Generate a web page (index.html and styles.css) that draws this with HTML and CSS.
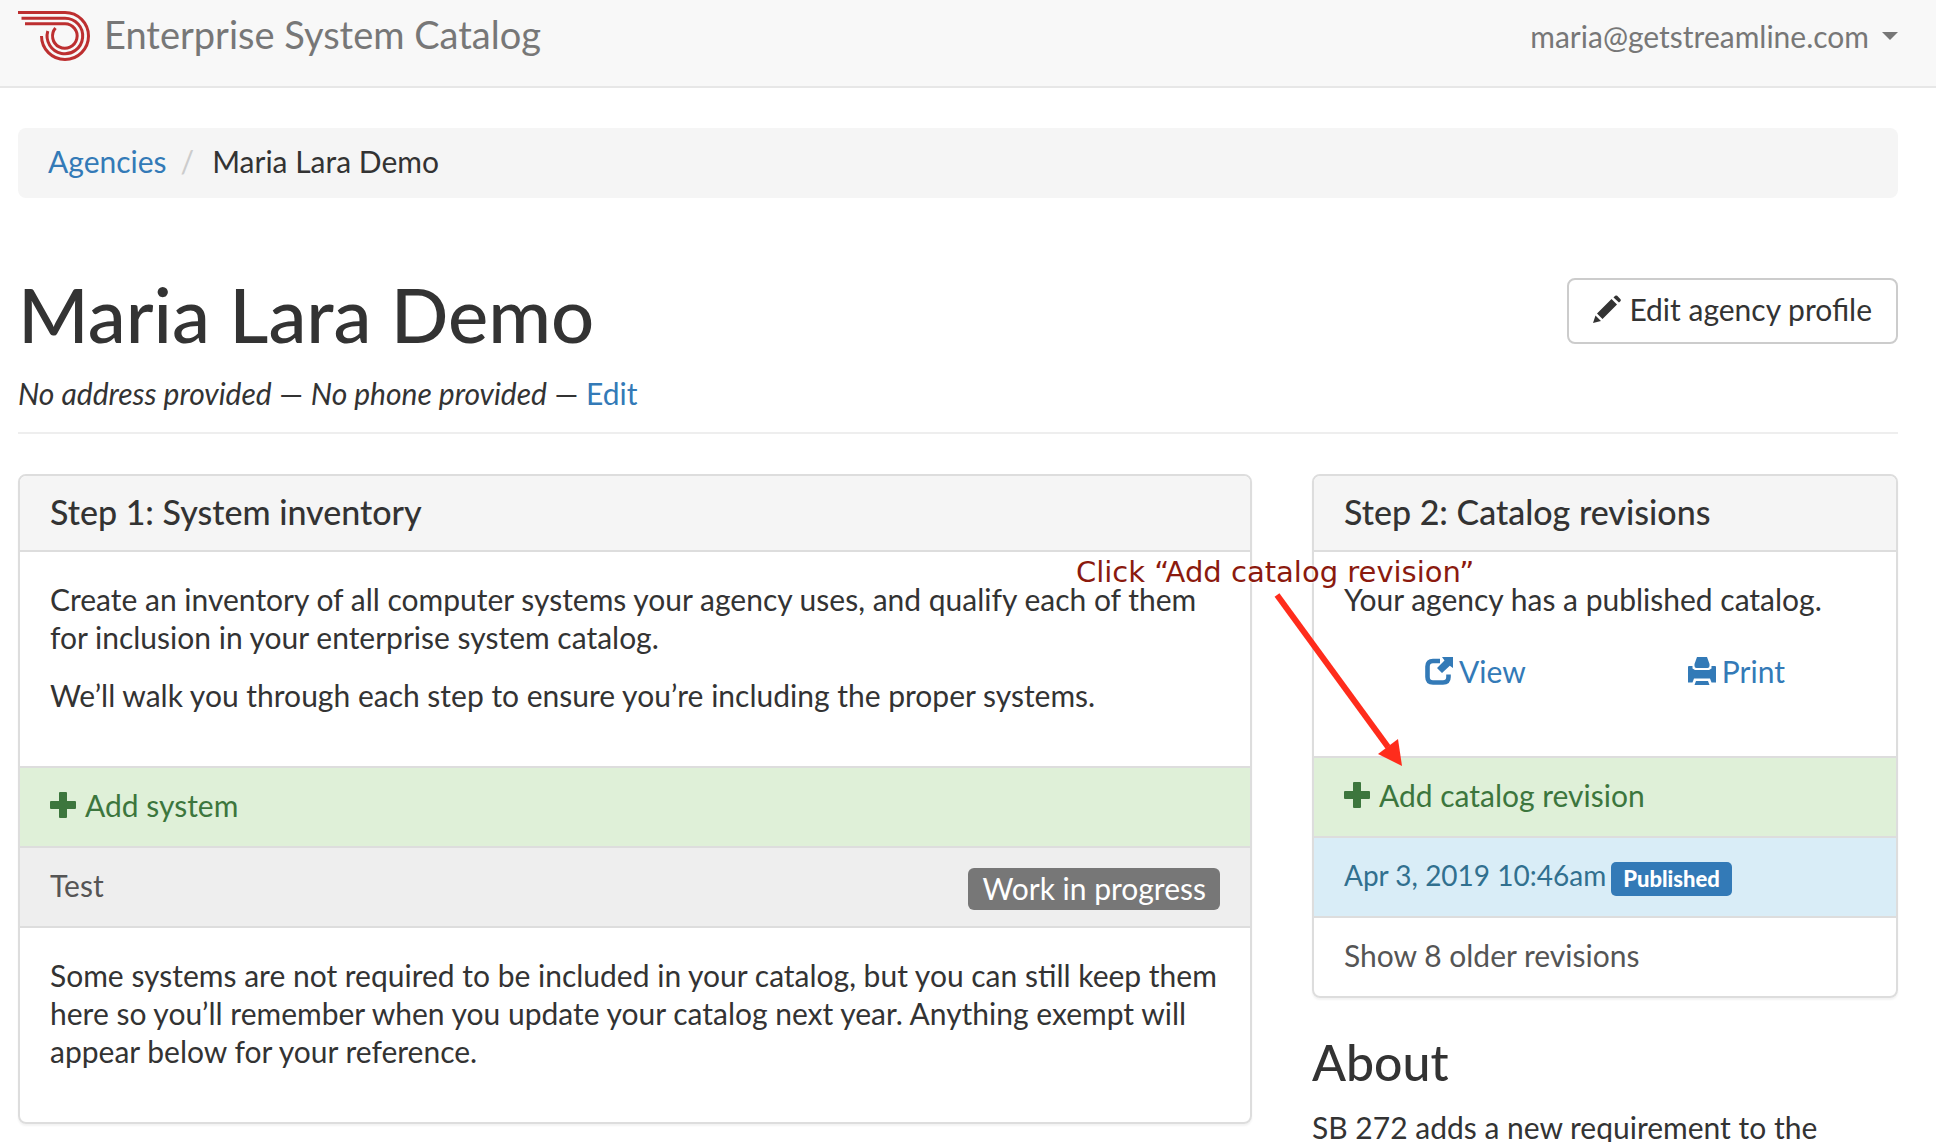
FILE: index.html
```html
<!DOCTYPE html>
<html lang="en">
<head>
<meta charset="utf-8">
<title>Maria Lara Demo – Enterprise System Catalog</title>
<link rel="stylesheet" href="styles.css">
</head>
<body>
<header class="navbar">
  <a class="brand" href="#">
    <svg class="logo" viewBox="0 0 72 50" fill="none" stroke="#bd2f30" stroke-width="3" aria-hidden="true">
      <path d="M0 1.500H47A23.500 23.500 0 1 1 23.500 25"/>
      <path d="M3.500 7.200H47A17.800 17.800 0 1 1 29.800 20"/>
      <path d="M7 12.700H47A12.300 12.300 0 1 1 37.500 17"/>
    </svg>
    <span>Enterprise System Catalog</span>
  </a>
  <button class="account" type="button">maria@getstreamline.com <span class="caret"></span></button>
</header>

<main class="container">
  <nav class="breadcrumb" aria-label="Breadcrumb">
    <a href="#">Agencies</a>
    <span class="slash">/</span>
    <span>Maria Lara Demo</span>
  </nav>

  <div class="page-header">
    <div>
      <h1>Maria Lara Demo</h1>
      <p class="contact"><em>No address provided</em> — <em>No phone provided</em> — <a href="#">Edit</a></p>
    </div>
    <button class="btn" type="button">
      <svg class="icon" viewBox="0 0 28 28" fill="currentColor" aria-hidden="true"><path d="M0 28L2.500 20.500L8 26ZM4 18.500L18.500 4L24 9.500L9.500 24ZM20.500 2.500L22.200 .8Q23.200 0 24.200 .8L27.500 4.200Q28.200 5.200 27.400 6.200L26 7.600Z"/></svg>
      Edit agency profile
    </button>
  </div>

  <div class="columns">
    <section class="panel">
      <h2 class="panel-heading">Step 1: System inventory</h2>
      <div class="panel-body">
        <p>Create an inventory of all computer systems your agency uses, and qualify each of them for inclusion in your enterprise system catalog.</p>
        <p>We’ll walk you through each step to ensure you’re including the proper systems.</p>
      </div>
      <a class="item add" href="#">
        <svg class="plus" viewBox="0 0 26 26" fill="currentColor" aria-hidden="true"><path d="M10 0h6q1 0 1 1v8h8q1 0 1 1v6q0 1-1 1h-8v8q0 1-1 1h-6q-1 0-1-1v-8H1q-1 0-1-1v-6q0-1 1-1h8V1q0-1 1-1z"/></svg>
        Add system
      </a>
      <a class="item system" href="#">Test <span class="status">Work in progress</span></a>
      <div class="panel-body">
        <p>Some systems are not required to be included in your catalog, but you can still keep them here so you’ll remember when you update your catalog next year. Anything exempt will appear below for your reference.</p>
      </div>
    </section>

    <aside class="sidebar">
      <section class="panel">
        <h2 class="panel-heading">Step 2: Catalog revisions</h2>
        <div class="panel-body">
          <p>Your agency has a published catalog.</p>
          <div class="actions">
            <a href="#"><svg class="icon" viewBox="0 0 28 28" aria-hidden="true"><path d="M15 4H8Q2.500 4 2.500 9.500V20Q2.500 25.500 8 25.500H18Q23.500 25.500 23.500 20V17.500" fill="none" stroke="currentColor" stroke-width="4.600"/><path d="M17 0H28V11L24.800 8.800L17 16L12 11L19.500 3.500Z" fill="currentColor"/></svg>View</a>
            <a href="#"><svg class="icon" viewBox="0 0 28 28" fill="currentColor" aria-hidden="true"><path d="M9 0h10l2.500 7v2q0 2-2 2h-11q-2 0-2-2V7zM1 9h3.500v2.500L7 13h14l2.500-1.500V9H27q1 0 1 1v15.500h-4.500L22 21.500H6L4.500 25.500H0V10q0-1 1-1zM8 24h12l1.500 4h-15z"/></svg>Print</a>
          </div>
        </div>
        <a class="item add" href="#">
          <svg class="plus" viewBox="0 0 26 26" fill="currentColor" aria-hidden="true"><path d="M10 0h6q1 0 1 1v8h8q1 0 1 1v6q0 1-1 1h-8v8q0 1-1 1h-6q-1 0-1-1v-8H1q-1 0-1-1v-6q0-1 1-1h8V1q0-1 1-1z"/></svg>
          Add catalog revision
        </a>
        <a class="item revision" href="#">Apr 3, 2019 10:46am <span class="label">Published</span></a>
        <a class="item" href="#">Show 8 older revisions</a>
      </section>
      <section class="about">
        <h2>About</h2>
        <p>SB 272 adds a new requirement to the</p>
      </section>
      <div class="callout">
        <span>Click “Add catalog revision”</span>
        <svg class="arrow" viewBox="0 0 130 176" aria-hidden="true"><path d="M3 3L114 155" stroke="#ff2c1c" stroke-width="6"/><path d="M128 174L124 147L104 162Z" fill="#ff2c1c"/></svg>
      </div>
    </aside>
  </div>
</main>
</body>
</html>
```
FILE: styles.css
```css
* {
  box-sizing: border-box;
}

body {
  margin: 0;
  background: #fff;
  color: #333;
  font: 30px/38px Lato, "Open Sans", sans-serif;
}

a {
  color: #337ab7;
  text-decoration: none;
}

h1,
h2,
p {
  margin: 0;
}

button {
  font: inherit;
  cursor: pointer;
}

.navbar {
  display: flex;
  justify-content: space-between;
  align-items: flex-start;
  min-height: 88px;
  padding: 11px 38px 0 18px;
  background: #f8f8f8;
  border-bottom: 2px solid #e7e7e7;
}

.brand {
  display: flex;
  gap: 14px;
  color: #777;
  font-size: 38px;
  line-height: 46px;
}

.logo {
  width: 72px;
  height: 50px;
}

.account {
  display: flex;
  align-items: center;
  gap: 13px;
  padding: 6px 0;
  border: 0;
  background: none;
  color: #777;
}

.caret {
  border: 8px solid transparent;
  border-top-color: currentColor;
  border-bottom: 0;
}

.container {
  padding: 40px 38px 0 18px;
}

.breadcrumb {
  display: flex;
  padding: 14px 30px 18px;
  border-radius: 8px;
  background: #f5f5f5;
}

.slash {
  padding: 0 18px 0 14px;
  color: #ccc;
}

.page-header {
  display: flex;
  justify-content: space-between;
  align-items: flex-start;
  margin: 80px 0 40px;
  padding-bottom: 20px;
  border-bottom: 2px solid #eee;
}

h1 {
  font-size: 76px;
  font-weight: 500;
  line-height: 72px;
}

.contact {
  margin-top: 24px;
}

.btn {
  display: flex;
  align-items: center;
  gap: 8px;
  padding: 10px 24px 14px;
  border: 2px solid #ccc;
  border-radius: 8px;
  background: #fff;
  color: #333;
}

.icon {
  width: 28px;
  height: 28px;
}

.columns {
  display: grid;
  grid-template-columns: 1234fr 586fr;
  align-items: start;
  gap: 60px;
}

.panel {
  border: 2px solid #ddd;
  border-radius: 8px;
  overflow: hidden;
  box-shadow: 0 2px 2px rgba(0, 0, 0, 0.05);
}

.panel-heading {
  padding: 19px 30px 21px;
  border-bottom: 2px solid #ddd;
  background: #f5f5f5;
  font-size: 34px;
  font-weight: 500;
  line-height: 34px;
}

.panel-body {
  padding: 28px 30px 52px;
}

.panel-body p + p {
  margin-top: 20px;
}

.item {
  display: flex;
  align-items: center;
  padding: 18px 30px 22px;
  border-top: 2px solid #ddd;
  color: #555;
}

.item + .panel-body {
  border-top: 2px solid #ddd;
}

.add {
  gap: 9px;
  background: #dff0d8;
  color: #3c763d;
}

.plus {
  width: 26px;
  height: 26px;
}

.system {
  justify-content: space-between;
  background: #eee;
}

.status {
  margin: 2px 0 -6px;
  padding: 1px 14px 3px;
  border-radius: 6px;
  background: #777;
  color: #fff;
}

.revision {
  gap: 5px;
  background: #d9edf7;
  color: #31708f;
  font-size: 28px;
}

.label {
  margin: 4px 0 -4px;
  padding: 0 12px;
  border-radius: 5px;
  background: #337ab7;
  color: #fff;
  font-size: 22px;
  font-weight: 900;
  line-height: 34px;
}

.actions {
  display: flex;
  justify-content: space-around;
  margin-top: 20px;
  padding: 14px 0;
}

.actions a {
  display: flex;
  align-items: center;
  gap: 6px;
}

.sidebar {
  position: relative;
}

.about {
  margin-top: 38px;
}

.about h2 {
  margin-bottom: 20px;
  font-size: 50px;
  font-weight: 500;
  line-height: 52px;
}

.callout {
  position: absolute;
  top: 80px;
  left: -236px;
  color: #8b1a0e;
  font: 29px/36px "DejaVu Sans", sans-serif;
  white-space: nowrap;
  text-shadow: 0 0 2px #fff, 0 0 3px #fff;
  pointer-events: none;
}

.arrow {
  display: block;
  width: 130px;
  height: 176px;
  margin: 2px 0 0 198px;
}
```
